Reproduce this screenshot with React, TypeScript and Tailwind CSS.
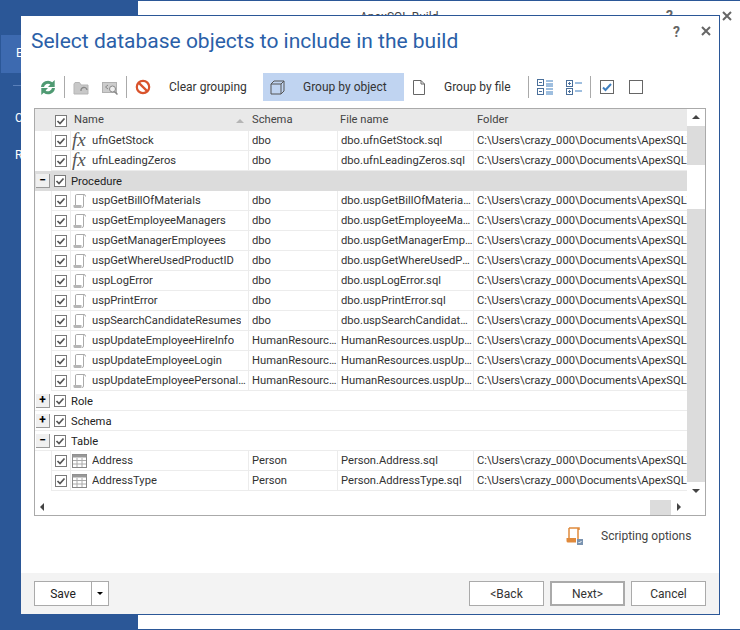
import React from "react";

const font = { fontFamily: 'Roboto, sans-serif' };

function Check() {
  return (
    <svg width="12" height="12" viewBox="0 0 12 12" className="shrink-0">
      <rect x="0.5" y="0.5" width="11" height="11" fill="#fff" stroke="#7a7a7a" />
      <path d="M2.5 6 L5 8.5 L9.5 3.5" fill="none" stroke="#555" strokeWidth="1.7" />
    </svg>
  );
}

function Fx() {
  return (
    <span className="w-[20px] text-[19px] leading-[20px] italic text-[#555] shrink-0 -mt-[3px]" style={{ fontFamily: '"Liberation Serif", serif' }}>
      fx
    </span>
  );
}

function Proc() {
  return (
    <svg width="16" height="16" viewBox="0 0 16 16" className="shrink-0 mr-[4px]">
      <path d="M4.5 1.5 Q3.5 1.5 3.5 3 V12 M4.5 1.5 H12 Q13.5 1.5 13.5 3.5 M12 1.5 Q11.5 2 11.5 3.5 V13 Q11.5 14.5 10 14.5" fill="none" stroke="#aaa" />
      <path d="M1.5 12 H9.5 V15 H3 Q1.5 15 1.5 13.5 Z" fill="#b5b5b5" />
    </svg>
  );
}

function Tbl() {
  return (
    <svg width="15" height="14" viewBox="0 0 15 14" className="shrink-0 mr-[5px]">
      <rect x="0.5" y="0.5" width="14" height="13" fill="#fff" stroke="#888" />
      <rect x="0.5" y="0.5" width="14" height="3" fill="#999" />
      <path d="M5 4 V13 M10 4 V13 M1 6.5 H14 M1 10 H14" stroke="#aaa" />
    </svg>
  );
}

const F = "C:\\Users\\crazy_000\\Documents\\ApexSQL\\ApexSQL Build";

function Row({ icon, name, schema, file }: { icon: React.ReactNode; name: string; schema: string; file: string }) {
  return (
    <div className="flex h-[20px] items-stretch">
      <div className="w-[16px] shrink-0" />
      <div className="w-[20px] shrink-0 flex items-center justify-center border-l border-r border-b border-[#ececec] pt-[1px]"><Check /></div>
      <div className="w-[178px] shrink-0 flex items-center border-r border-b border-[#ececec] pl-[1px] pt-[1px] overflow-hidden">
        {icon}
        <span className="truncate">{name}</span>
      </div>
      <div className="w-[89px] shrink-0 flex items-center border-r border-b border-[#ececec] pl-[3px] pt-[1px] overflow-hidden whitespace-nowrap">
        <span className="truncate">{schema}</span>
      </div>
      <div className="w-[136px] shrink-0 flex items-center border-r border-b border-[#ececec] pl-[3px] pt-[1px] overflow-hidden whitespace-nowrap">
        <span className="truncate">{file}</span>
      </div>
      <div className="w-[214px] shrink-0 flex items-center border-b border-[#ececec] pl-[3px] pt-[1px] overflow-hidden whitespace-nowrap">{F}</div>
    </div>
  );
}

function Group({ label, open, shaded = false }: { label: string; open: boolean; shaded?: boolean }) {
  return (
    <div className={`flex h-[20px] items-center border-b ${shaded ? "bg-[#dcdcdc] border-[#dcdcdc]" : "border-[#ececec]"}`}>
      <div className="ml-[1px] w-[14px] h-[14px] bg-[#f0f0f0] border-r border-b border-[#999] flex items-center justify-center text-[12px] leading-none font-bold text-black">
        {open ? "−" : "+"}
      </div>
      <div className="ml-[4px]"><Check /></div>
      <span className="ml-[5px] mt-[3px] text-[#222]">{label}</span>
    </div>
  );
}

function ToolSep() {
  return <div className="w-[1px] h-[22px] bg-[#aaa] shrink-0" />;
}

function Toolbar() {
  return (
    <div className="flex items-center h-[28px] mt-[17px] ml-[19px]">
      <svg width="16" height="17" viewBox="0 0 16 17" className="shrink-0">
        <path d="M1 8 A7 7 0 0 1 12.3 3.2 L14.7 1 V8 H8 L10.4 5.6 A4 4 0 0 0 4 8 Z" fill="#4f9a72" />
        <path d="M15 9 A7 7 0 0 1 3.7 13.8 L1.3 16 V9 H8 L5.6 11.4 A4 4 0 0 0 12 9 Z" fill="#4f9a72" />
      </svg>
      <div className="ml-[8px]"><ToolSep /></div>
      <svg width="17" height="14" viewBox="0 0 17 14" className="ml-[8px] mt-[2px] shrink-0">
        <path d="M1 3 V13 H15 V4 H8 L6.5 1.5 H2 Z" fill="#c8c8c8" stroke="#b5b5b5" />
        <path d="M8 10 A3 3 0 0 1 14 9" fill="none" stroke="#888" strokeWidth="1.3" />
      </svg>
      <svg width="17" height="15" viewBox="0 0 17 15" className="ml-[12px] mt-[2px] shrink-0">
        <rect x="0.5" y="1.5" width="14" height="10" fill="#ccc" stroke="#b0b0b0" />
        <circle cx="10.5" cy="8" r="3" fill="#eee" stroke="#888" />
        <path d="M12.5 10.5 L15.5 13.5" stroke="#888" strokeWidth="1.5" />
        <path d="M6 4 L3.5 6 L6 8" fill="none" stroke="#888" />
      </svg>
      <div className="ml-[7px]"><ToolSep /></div>
      <svg width="16" height="16" viewBox="0 0 16 16" className="ml-[8px] shrink-0">
        <circle cx="8" cy="8" r="6.2" fill="none" stroke="#d9532c" strokeWidth="2.2" />
        <path d="M3.6 3.6 L12.4 12.4" stroke="#d9532c" strokeWidth="2.2" />
      </svg>
      <span className="ml-[18px] w-[77px] shrink-0 text-[12px] whitespace-nowrap text-[#333]">Clear grouping</span>
      <div className="ml-[17px] flex items-center h-[28px] w-[141px] bg-[#c0d4f1] shrink-0">
        <svg width="15" height="15" viewBox="0 0 15 15" className="ml-[7px] shrink-0">
          <path d="M1 4 H11 V14 H1 Z M1 4 L4 1 H14 V11 L11 14 M11 4 L14 1" fill="none" stroke="#555" />
        </svg>
        <span className="ml-[18px] text-[12px] whitespace-nowrap text-[#333]">Group by object</span>
      </div>
      <svg width="12" height="15" viewBox="0 0 12 15" className="ml-[9px] shrink-0">
        <path d="M0.5 0.5 H8 L11.5 4 V14.5 H0.5 Z M8 0.5 V4 H11.5" fill="#fff" stroke="#666" />
      </svg>
      <span className="ml-[19px] w-[68px] shrink-0 text-[12px] text-[#333] whitespace-nowrap">Group by file</span>
      <div className="ml-[16px]"><ToolSep /></div>
      <svg width="17" height="16" viewBox="0 0 17 16" className="ml-[8px] shrink-0">
        <rect x="0.5" y="0.5" width="6" height="6" fill="none" stroke="#4a6f9a" />
        <rect x="0.5" y="9.5" width="6" height="6" fill="none" stroke="#4a6f9a" />
        <path d="M2 3.5 H5 M2 12.5 H5" stroke="#4a6f9a" />
        <path d="M9 2 H16 M9 5 H16 M9 7 H16 M9 10 H16 M9 13 H16 M9 15 H16" stroke="#3f7fbf" />
      </svg>
      <svg width="17" height="15" viewBox="0 0 17 15" className="ml-[12px] shrink-0">
        <rect x="0.5" y="0.5" width="6" height="6" fill="none" stroke="#4a6f9a" />
        <rect x="0.5" y="8.5" width="6" height="6" fill="none" stroke="#4a6f9a" />
        <path d="M2 3.5 H5 M3.5 2 V5 M2 11.5 H5 M3.5 10 V13" stroke="#4a6f9a" />
        <path d="M9 3 H16 M9 11 H16" stroke="#3f7fbf" />
      </svg>
      <div className="ml-[7px]"><ToolSep /></div>
      <svg width="14" height="14" viewBox="0 0 14 14" className="ml-[9px] shrink-0">
        <rect x="0.5" y="0.5" width="13" height="13" fill="#fff" stroke="#666" />
        <path d="M3 7.5 L5.5 10 L11 4" fill="none" stroke="#3f7fbf" strokeWidth="2" />
      </svg>
      <div className="ml-[15px] w-[14px] h-[14px] border border-[#666] bg-white shrink-0" />
    </div>
  );
}

function Table() {
  return (
    <div className="relative mx-[13px] mt-[7px] h-[408px] border border-[#aaa] overflow-hidden bg-white">
      <div className="flex h-[22px] bg-[#e9e9e9] items-center text-[#444] pt-[1px]">
        <div className="w-[20px] shrink-0" />
        <Check />
        <span className="ml-[7px] w-[178px] shrink-0 flex items-center">Name</span>
        <span className="w-[88px] shrink-0">Schema</span>
        <span className="w-[137px] shrink-0">File name</span>
        <span>Folder</span>
      </div>
      <div className="absolute left-[201px] top-[10px] w-0 h-0 border-l-[4px] border-r-[4px] border-b-[4px] border-l-transparent border-r-transparent border-b-[#b5b5b5]" />
      <div className="w-[653px]">
        <Row icon={<Fx />} name="ufnGetStock" schema="dbo" file="dbo.ufnGetStock.sql" />
        <Row icon={<Fx />} name="ufnLeadingZeros" schema="dbo" file="dbo.ufnLeadingZeros.sql" />
        <Group label="Procedure" open shaded />
        <Row icon={<Proc />} name="uspGetBillOfMaterials" schema="dbo" file="dbo.uspGetBillOfMaterials.sql" />
        <Row icon={<Proc />} name="uspGetEmployeeManagers" schema="dbo" file="dbo.uspGetEmployeeManagers.sql" />
        <Row icon={<Proc />} name="uspGetManagerEmployees" schema="dbo" file="dbo.uspGetManagerEmployees.sql" />
        <Row icon={<Proc />} name="uspGetWhereUsedProductID" schema="dbo" file="dbo.uspGetWhereUsedProductID.sql" />
        <Row icon={<Proc />} name="uspLogError" schema="dbo" file="dbo.uspLogError.sql" />
        <Row icon={<Proc />} name="uspPrintError" schema="dbo" file="dbo.uspPrintError.sql" />
        <Row icon={<Proc />} name="uspSearchCandidateResumes" schema="dbo" file="dbo.uspSearchCandidateResumes.sql" />
        <Row icon={<Proc />} name="uspUpdateEmployeeHireInfo" schema="HumanResources" file="HumanResources.uspUpdateEmployeeHireInfo.sql" />
        <Row icon={<Proc />} name="uspUpdateEmployeeLogin" schema="HumanResources" file="HumanResources.uspUpdateEmployeeLogin.sql" />
        <Row icon={<Proc />} name="uspUpdateEmployeePersonalInfo" schema="HumanResources" file="HumanResources.uspUpdateEmployeePersonalInfo.sql" />
        <Group label="Role" open={false} />
        <Group label="Schema" open={false} />
        <Group label="Table" open />
        <Row icon={<Tbl />} name="Address" schema="Person" file="Person.Address.sql" />
        <Row icon={<Tbl />} name="AddressType" schema="Person" file="Person.AddressType.sql" />
      </div>
      {/* vertical scrollbar */}
      <div className="absolute right-0 top-0 bottom-0 w-[18px] bg-white">
        <div className="absolute left-[5px] top-[6px] w-0 h-0 border-l-[4px] border-r-[4px] border-b-[4px] border-l-transparent border-r-transparent border-b-[#444]" />
        <div className="absolute left-0 right-0 top-[17px] h-[39px] bg-[#dcdcdc]" />
        <div className="absolute left-0 right-0 top-[100px] h-[273px] bg-[#dcdcdc]" />
        <div className="absolute left-[5px] top-[380px] w-0 h-0 border-l-[4px] border-r-[4px] border-t-[4px] border-l-transparent border-r-transparent border-t-[#444]" />
      </div>
      {/* horizontal scrollbar */}
      <div className="absolute left-[5px] top-[394px] w-0 h-0 border-t-[4px] border-b-[4px] border-r-[4px] border-t-transparent border-b-transparent border-r-[#444]" />
      <div className="absolute left-[615px] top-[391px] w-[21px] h-[16px] bg-[#dcdcdc]" />
      <div className="absolute left-[642px] top-[394px] w-0 h-0 border-t-[4px] border-b-[4px] border-l-[4px] border-t-transparent border-b-transparent border-l-[#444]" />
    </div>
  );
}

function Btn({ label, heavy = false }: { label: string; heavy?: boolean }) {
  return (
    <div className={`w-[75px] h-[25px] flex items-center justify-center bg-white text-[12px] text-[#333] ${heavy ? "border-2 border-[#aaa]" : "border border-[#aaa]"}`}>
      {label}
    </div>
  );
}

function Dialog() {
  return (
    <div className="absolute left-[21px] top-[15px] w-[699px] h-[600px] bg-white border-t border-r border-b border-[#2b5797] flex flex-col">
      <div className="relative">
        <h1 className="ml-[10px] mt-[10px] text-[21px] leading-[30px] text-[#2b5fa8]">Select database objects to include in the build</h1>
        <span className="absolute left-[652px] top-[6px] text-[14px] font-bold text-[#666]">?</span>
        <svg width="10" height="10" viewBox="0 0 10 10" className="absolute left-[680px] top-[10px]">
          <path d="M1 1 L9 9 M9 1 L1 9" stroke="#666" strokeWidth="2" />
        </svg>
      </div>
      <Toolbar />
      <Table />
      <div className="flex items-center justify-end mt-[10px] mr-[28px] h-[20px]">
        <svg width="17" height="18" viewBox="0 0 17 18" className="shrink-0">
          <path d="M3 1 H13 V3 M12 1 V12 M3 1 V12" fill="none" stroke="#e08a3c" strokeWidth="1.5" />
          <path d="M0.5 11 H10 V15.5 H2 Q0.5 15.5 0.5 14 Z" fill="#e08a3c" />
          <rect x="11" y="12" width="6" height="6" fill="#7a93b0" />
          <path d="M12.5 15 L13.5 16 L15.5 14" fill="none" stroke="#fff" />
        </svg>
        <span className="ml-[18px] w-[90px] text-[12px] whitespace-nowrap text-[#444]">Scripting options</span>
      </div>
      <div className="mt-auto h-[41px] bg-[#f3f3f3] flex items-center px-[13px] justify-between">
        <div className="flex h-[25px] w-[75px] border border-[#aaa] bg-white">
          <div className="w-[57px] flex items-center justify-center text-[12px] text-[#222] border-r border-[#aaa]">Save</div>
          <div className="flex-1 flex items-center justify-center">
            <div className="w-0 h-0 border-l-[3px] border-r-[3px] border-t-[3px] border-l-transparent border-r-transparent border-t-black" />
          </div>
        </div>
        <div className="flex gap-[6px]">
          <Btn label="<Back" />
          <Btn label="Next>" heavy />
          <Btn label="Cancel" />
        </div>
      </div>
    </div>
  );
}

export default function App() {
  return (
    <div className="relative w-[740px] h-[630px] bg-[#2b5797] overflow-hidden text-[11.2px] text-[#333]" style={font}>
      {/* sidebar of the window behind */}
      <div className="absolute left-[1px] top-[35px] w-[20px] h-[38px] bg-[#3d6ab0] text-white text-[12px] pl-[15px] pt-[9px]">E</div>
      <div className="absolute left-[13px] top-[85px] w-[8px] h-[1px] bg-[#5a80ba]" />
      <span className="absolute left-[15px] top-[109px] text-white text-[12px]">C</span>
      <span className="absolute left-[15px] top-[146px] text-white text-[12px]">R</span>
      {/* window behind */}
      <div className="absolute left-[138px] top-[1px] right-0 bottom-[1px] bg-white">
        <span className="absolute left-[222px] top-[7px] text-[12px] text-[#444]">ApexSQL Build</span>
        <span className="absolute left-[528px] top-[5px] text-[14px] font-bold text-[#666]">?</span>
        <svg width="10" height="10" viewBox="0 0 10 10" className="absolute left-[584px] top-[10px]">
          <path d="M1 1 L9 9 M9 1 L1 9" stroke="#666" strokeWidth="2" />
        </svg>
      </div>
      <Dialog />
    </div>
  );
}
